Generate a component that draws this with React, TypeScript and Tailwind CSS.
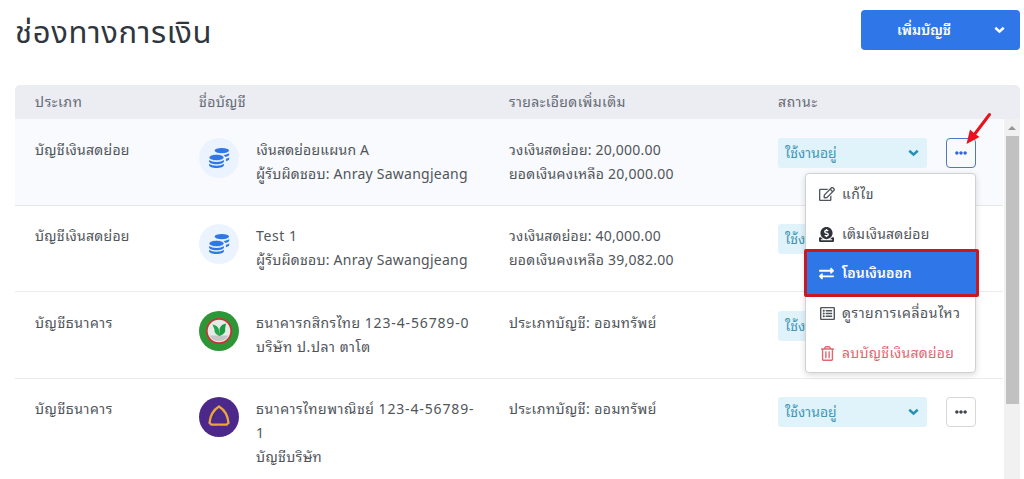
import React from "react";
import {
  FaDonate,
  FaEllipsisH,
  FaExchangeAlt,
  FaRegEdit,
  FaRegListAlt,
  FaRegTrashAlt,
} from "react-icons/fa";

function Chevron({ className = "" }: { className?: string }) {
  return (
    <svg className={className} width="11" height="8" viewBox="0 0 11 8" fill="none">
      <path d="M1.300 1.800 5.500 5.600l4.200-3.800" stroke="currentColor" strokeWidth="2.500" />
    </svg>
  );
}

function CoinsLogo() {
  return (
    <div className="flex h-10 w-10 items-center justify-center rounded-full bg-[#ebf4fe]">
      <svg width="22" height="22" viewBox="0 0 22 22" fill="#2f76e6">
        <ellipse cx="13.800" cy="3.600" rx="7.200" ry="2.600" />
        <path d="M15.300 7.900c2.600-.2 4.900-.9 5.900-2v1.700c0 1.100-1.500 2.100-3.700 2.500-.4-.9-1.200-1.600-2.200-2.200z" />
        <path d="M17.900 11.700c1.500-.3 2.700-.8 3.300-1.500v1.700c0 1-1.300 1.800-3.300 2.300z" />
        <ellipse cx="8.500" cy="10.500" rx="7.500" ry="3.200" stroke="#ebf4fe" strokeWidth="0.800" />
        <path d="M1.100 13c1.500 1.300 4.300 2 7.400 2s5.900-.7 7.400-2v1.500c0 1.500-3.300 2.700-7.400 2.700s-7.400-1.200-7.400-2.700z" />
        <path d="M1.100 16.700c1.500 1.300 4.300 2 7.400 2s5.900-.7 7.400-2v1.500c0 1.500-3.300 2.700-7.400 2.700s-7.400-1.200-7.400-2.700z" />
      </svg>
    </div>
  );
}

function LeafLogo() {
  return (
    <svg width="40" height="40" viewBox="0 0 40 40">
      <circle cx="20" cy="20" r="20" fill="#2f9637" />
      <circle cx="20" cy="20" r="12.200" fill="#e5ebe6" stroke="#c83236" strokeWidth="1.700" />
      <path d="M10.500 24.500h19a10.800 10.800 0 0 1-19 0z" fill="#c3c8c5" />
      <path d="M13.500 13.500c4 .5 6 2.500 6.700 6v5.500c-3.800-2-5.200-4-4.700-6.500z" fill="#25a54b" />
      <path d="M27 12.500c-4.500 1-6.700 3.500-6.500 7.500l-.5 5c4.800-1.500 7-4 6-7z" fill="#1d9a42" />
    </svg>
  );
}

function ArchLogo() {
  return (
    <svg width="40" height="40" viewBox="0 0 40 40">
      <circle cx="20" cy="20" r="20" fill="#4b2889" />
      <path
        d="M18.900 28.500v-2M18.900 27.700h-6.500l-1.900-1.900c.7-7.300 3.800-12.800 9.500-16.300 5.700 3.500 8.800 9 9.500 16.300l-1.900 1.900h-6.500v-1.200"
        fill="none"
        stroke="#eba63b"
        strokeWidth="2.300"
      />
    </svg>
  );
}

function StatusSelect() {
  return (
    <div className="flex h-[30px] w-[149px] items-center justify-between rounded-[3px] bg-[#e0f3fb] pr-2 pl-[7px] text-[#4597b4]">
      <span>ใช้งานอยู่</span>
      <Chevron className="text-[#2590b5]" />
    </div>
  );
}

function MoreButton({ active = false }: { active?: boolean }) {
  return (
    <button
      className={
        active
          ? "flex h-[30px] w-[30px] items-center justify-center rounded-[4px] border border-[#5078bd] bg-[#f8fafd] text-[#3564d9]"
          : "flex h-[30px] w-[30px] items-center justify-center rounded-[4px] border border-[#d5d7da] bg-white text-[#3f454c]"
      }
    >
      <FaEllipsisH size={12} />
    </button>
  );
}

type Account = {
  type: React.ReactNode;
  logo: React.ReactNode;
  lines: React.ReactNode[];
  details: React.ReactNode[];
};

const pettyCash = <span className="tracking-[0.27px]">บัญชีเงินสดย่อย</span>;
const bankAccount = <span className="tracking-[0.55px]">บัญชีธนาคาร</span>;
const owner = <span className="tracking-[0.25px]">ผู้รับผิดชอบ: Anray Sawangjeang</span>;
const savings = <span className="tracking-[0.45px]">ประเภทบัญชี: ออมทรัพย์</span>;

const accounts: Account[] = [
  {
    type: pettyCash,
    logo: <CoinsLogo />,
    lines: [<span className="tracking-[0.2px]">เงินสดย่อยแผนก A</span>, owner],
    details: [
      <span className="tracking-[0.2px]">วงเงินสดย่อย: 20,000.00</span>,
      <span className="tracking-[0.25px]">ยอดเงินคงเหลือ 20,000.00</span>,
    ],
  },
  {
    type: pettyCash,
    logo: <CoinsLogo />,
    lines: [<span className="tracking-[0.6px]">Test 1</span>, owner],
    details: [
      <span className="tracking-[0.2px]">วงเงินสดย่อย: 40,000.00</span>,
      <span className="tracking-[0.25px]">ยอดเงินคงเหลือ 39,082.00</span>,
    ],
  },
  {
    type: bankAccount,
    logo: <LeafLogo />,
    lines: [
      <span className="tracking-[0.5px]">ธนาคารกสิกรไทย <span className="tracking-[0.85px]">123-4-56789-0</span></span>,
      <span className="tracking-[0.6px]">บริษัท ป.ปลา ตาโต</span>,
    ],
    details: [savings],
  },
  {
    type: bankAccount,
    logo: <ArchLogo />,
    lines: [
      <span className="tracking-[0.55px]">ธนาคารไทยพาณิชย์ <span className="tracking-[0.85px]">123-4-56789-</span></span>,
      "1",
      <span className="tracking-[0.4px]">บัญชีบริษัท</span>,
    ],
    details: [savings],
  },
];

function ActionMenu() {
  const item = "flex h-10 items-center pl-[13px]";
  const icon = "flex w-[23px] shrink-0 items-center";
  return (
    <div className="absolute top-[35px] right-0 z-10 h-[200px] w-[171px] rounded-[4px] border border-[#cfd1d4] bg-white text-[#50555b] shadow-[0_2px_6px_rgba(0,0,0,0.15)]">
      <div className={item}>
        <span className={icon}><FaRegEdit size={16} /></span>
        <span className="tracking-[0.5px]">แก้ไข</span>
      </div>
      <div className={item}>
        <span className={icon}><FaDonate size={15} className="text-[#30343a]" /></span>
        <span className="tracking-[0.2px]">เติมเงินสดย่อย</span>
      </div>
      <div className="-mt-[5px] -mr-[4px] -ml-[2px] flex h-[48px] items-center rounded-[2px] border-3 border-[#cb1720] bg-[#2f76e9] pl-3 font-semibold text-white">
        <span className={icon}><FaExchangeAlt size={15} /></span>
        <span>โอนเงินออก</span>
      </div>
      <div className="-mt-[4px] flex h-10 items-center pl-[14px]">
        <span className="flex w-[22px] shrink-0 items-center"><FaRegListAlt size={15} /></span>
        <span className="tracking-[0.55px]">ดูรายการเคลื่อนไหว</span>
      </div>
      <div className="flex h-10 items-center pl-[14px] text-[#e06870]">
        <span className="flex w-[22px] shrink-0 items-center"><FaRegTrashAlt size={15} /></span>
        <span className="tracking-[0.25px]">ลบบัญชีเงินสดย่อย</span>
      </div>
    </div>
  );
}

export default function App() {
  return (
    <div className="h-[479px] w-[1024px] overflow-hidden bg-white pt-[10px] pr-1 pl-[15px] font-['Noto_Sans','Noto_Sans_Thai_Looped','Noto_Looped_Thai','Loma','Garuda','Waree','Umpush','Noto_Serif_Thai',sans-serif] text-[14px] leading-6 text-[#50555a]">
      <header className="flex h-[75px] items-start justify-between">
        <h1 className="pt-[3px] font-['Noto_Sans','Noto_Sans_Thai',sans-serif] text-[31px] leading-[36px] tracking-[0.65px] text-[#30363d]">ช่องทางการเงิน</h1>
        <button className="flex h-10 w-[159px] items-center rounded-[4px] bg-[#2f76e9] pr-[15px] pl-9 font-semibold text-white">
          <span className="grow text-left">เพิ่มบัญชี</span>
          <Chevron />
        </button>
      </header>
      <div className="flex h-[34px] items-center rounded-t-[5px] bg-[#ecedf2] pl-5 text-[#666b75]">
        <div className="w-[164px] tracking-[0.6px]">ประเภท</div>
        <div className="w-[310px] tracking-[0.35px]">ชื่อบัญชี</div>
        <div className="w-[269px] tracking-[0.4px]">รายละเอียดเพิ่มเติม</div>
        <div className="tracking-[0.6px]">สถานะ</div>
      </div>
      <div className="flex h-[360px]">
        <div className="w-[988px]">
          {accounts.map((account, index) => (
            <div
              key={index}
              className={
                index === 0
                  ? "flex h-[86.500px] border-b border-[#e4e6ea] bg-[#f8fafd] pt-[19px] pl-5"
                  : "flex h-[86.500px] border-b border-[#e9ebed] pt-[18.500px] pl-5 last:h-[110px]"
              }
            >
              <div className="w-[164px]">{account.type}</div>
              <div className="w-[57px]">{account.logo}</div>
              <div className="w-[253px] whitespace-nowrap">
                {account.lines.map((line, i) => <div key={i}>{line}</div>)}
              </div>
              <div className="w-[269px] whitespace-nowrap">
                {account.details.map((line, i) => <div key={i}>{line}</div>)}
              </div>
              <div className="relative flex h-[30px] w-[198px] justify-between">
                <StatusSelect />
                <MoreButton active={index === 0} />
                {index === 0 && <ActionMenu />}
              </div>
            </div>
          ))}
        </div>
        <div className="ml-[1px] flex w-4 flex-col items-center bg-[#f1f1f1]">
          <div className="flex h-[17px] items-center">
            <svg width="8" height="4" viewBox="0 0 8 4"><path d="M0 4 4 0l4 4z" fill="#969696" /></svg>
          </div>
          <div className="h-[268px] w-[13px] bg-[#c1c1c1]" />
        </div>
      </div>
      <svg className="absolute top-[110px] left-[962px] z-20" width="32" height="38" viewBox="0 0 32 38">
        <path d="M27.500 4.500 12 25" stroke="#e8131c" strokeWidth="3" strokeLinecap="round" />
        <path d="m4.500 34 3.500-14.500 4.500 4 5 3.500z" fill="#e8131c" />
      </svg>
    </div>
  );
}
